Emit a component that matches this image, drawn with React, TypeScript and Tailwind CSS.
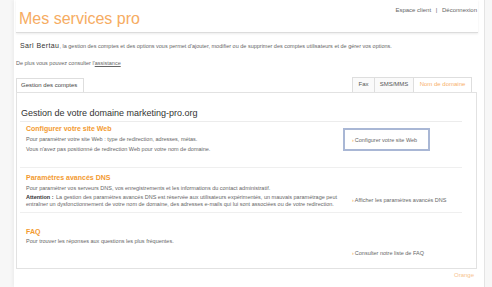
import React from "react";

// small link with the orange chevron in front
const ArrowLink = ({ label }: { label: string }) => (
    <span className="text-[5.5px] leading-[6px] text-[#666]">
        <span className="text-[#f39a2f] mr-[1px]">›</span>
        {label}
    </span>
);

const App: React.FC = () => {
    return (
        <div className="w-[492px] h-[287px] bg-[#f7f7f7] flex overflow-hidden font-['Liberation_Sans',Arial,sans-serif]">
            <div className="ml-[14px] w-[471px] h-full bg-white border-r border-[#e4e4e4] shadow-[-2px_0_3px_rgba(0,0,0,0.04)] pl-[2px] pr-[6px] flex flex-col">
                {/* header */}
                <div className="h-[33px] flex justify-between border-b border-[#dcdcdc] shadow-[0_1px_2px_rgba(0,0,0,0.08)]">
                    <h1 className="pl-[3px] pt-[11px] text-[16px] leading-none text-[#f6ac62]">
                        Mes services pro
                    </h1>
                    <div className="pt-[7px] pr-[1px] text-[6px] leading-[7px] text-[#666]">
                        Espace client <span className="mx-[3px]">|</span> Déconnexion
                    </div>
                </div>

                {/* intro */}
                <div className="mt-[9px] h-[8px] pl-[4px] flex items-baseline leading-[8px]">
                    <span className="text-[7px] text-[#333] tracking-[0.4px]">Sarl Bertau</span>
                    <span className="text-[5.5px] text-[#666]">
                        , la gestion des comptes et des options vous permet d'ajouter, modifier ou de supprimer des comptes utilisateurs et de gérer vos options.
                    </span>
                </div>
                <div className="mt-[10px] h-[6px] text-[5.5px] leading-[6px] text-[#666]">
                    De plus vous pouvez consulter l'<span className="underline">assistance</span>
                </div>

                {/* tabs */}
                <div className="mt-[11px] h-[15px] flex items-end justify-between mr-[6px]">
                    <div className="h-[14px] w-[68px] border border-b-0 border-[#dedede] bg-white text-[6px] leading-[12px] text-[#444] pl-[4px]">
                        Gestion des comptes
                    </div>
                    <div className="h-[15px] flex text-[6px] leading-[13px]">
                        <div className="w-[23px] border border-b-0 border-[#dedede] bg-[#fafafa] text-[#555] text-center">Fax</div>
                        <div className="w-[39px] border border-b-0 border-l-0 border-[#dedede] bg-[#fafafa] text-[#555] text-center">SMS/MMS</div>
                        <div className="w-[58px] border border-b-0 border-l-0 border-[#dedede] bg-white text-[#f7b06a] text-center">Nom de domaine</div>
                    </div>
                </div>

                {/* panel */}
                <div className="h-[177px] mr-[1px] border border-[#e2e2e2]">
                    <div className="ml-[3px] mr-[14px] pt-[15px]">
                        <h2 className="pl-[1px] pb-[4px] h-[14px] text-[9px] leading-[10px] text-[#333] border-b border-[#ececec]">
                            Gestion de votre domaine marketing-pro.org
                        </h2>

                        {/* web */}
                        <div className="h-[46px] border-b border-[#efefef] grid grid-cols-[323px_1fr]">
                            <div className="pl-[6px] pt-[3px]">
                                <h3 className="text-[7px] leading-[7px] font-bold text-[#f39a2f]">Configurer votre site Web</h3>
                                <p className="mt-[4px] text-[5.5px] leading-[6px] text-[#666]">
                                    Pour paramétrer votre site Web : type de redirection, adresses, métas.
                                </p>
                                <p className="mt-[4px] text-[5.5px] leading-[6px] text-[#666]">
                                    Vous n'avez pas positionné de redirection Web pour votre nom de domaine.
                                </p>
                            </div>
                            <div className="pt-[6px]">
                                <div className="w-[87px] h-[23px] border-2 border-[#a9b7d5] flex items-center pl-[7px]">
                                    <ArrowLink label="Configurer votre site Web" />
                                </div>
                            </div>
                        </div>

                        {/* dns */}
                        <div className="h-[45px] border-b border-[#efefef] grid grid-cols-[323px_1fr]">
                            <div className="pl-[6px] pt-[6px]">
                                <h3 className="text-[7px] leading-[7px] font-bold text-[#f39a2f]">Paramètres avancés DNS</h3>
                                <p className="mt-[4px] text-[5.5px] leading-[6px] text-[#666]">
                                    Pour paramétrer vos serveurs DNS, vos enregistrements et les informations du contact administratif.
                                </p>
                                <p className="mt-[3px] text-[5.5px] leading-[6.5px] text-[#666]">
                                    <b className="font-bold text-[#333] mr-[1px]">Attention :</b> La gestion des paramètres avancés DNS est réservée aux utilisateurs expérimentés, un mauvais paramétrage peut entraîner un dysfonctionnement de votre nom de domaine, des adresses e-mails qui lui sont associées ou de votre redirection.
                                </p>
                            </div>
                            <div className="pt-[17px] pl-[9px]">
                                <ArrowLink label="Afficher les paramètres avancés DNS" />
                            </div>
                        </div>

                        {/* faq */}
                        <div className="grid grid-cols-[323px_1fr]">
                            <div className="pl-[6px] pt-[15px]">
                                <h3 className="text-[7px] leading-[7px] font-bold text-[#f39a2f]">FAQ</h3>
                                <p className="mt-[3px] text-[5.5px] leading-[6px] text-[#666]">
                                    Pour trouver les réponses aux questions les plus fréquentes.
                                </p>
                            </div>
                            <div className="pt-[25px] pl-[9px]">
                                <ArrowLink label="Consulter notre liste de FAQ" />
                            </div>
                        </div>
                    </div>
                </div>

                {/* footer */}
                <div className="mt-[3px] mr-[4px] text-right text-[6px] leading-[7px] text-[#f7c48e]">Orange</div>
            </div>
        </div>
    );
};

export default App;
